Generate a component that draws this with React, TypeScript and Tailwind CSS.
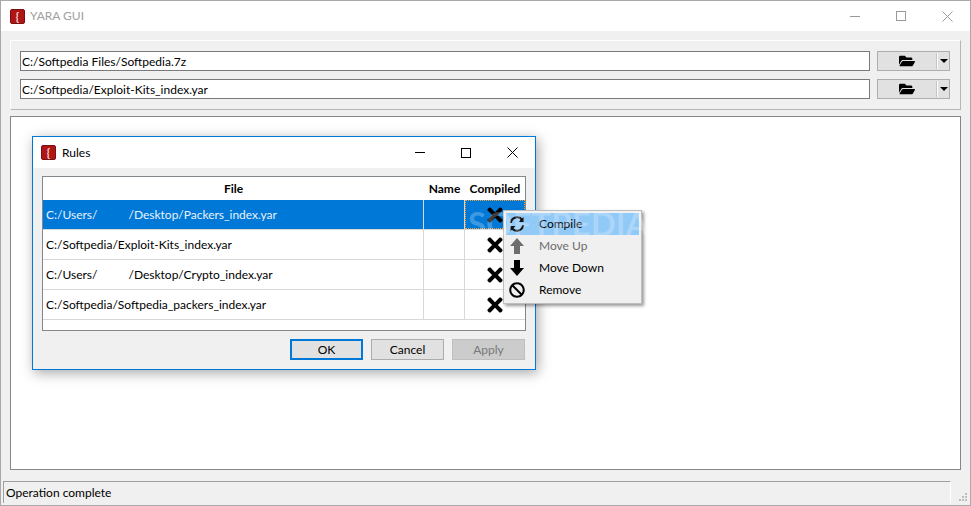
import { FaBan, FaFolderOpen, FaTimes } from 'react-icons/fa'

const ROWS = [
  { before: 'C:/Users/', after: '/Desktop/Packers_index.yar', selected: true },
  { before: 'C:/Softpedia/Exploit-Kits_index.yar', after: '' },
  { before: 'C:/Users/', after: '/Desktop/Crypto_index.yar' },
  { before: 'C:/Softpedia/Softpedia_packers_index.yar', after: '' },
]

function AppIcon() {
  return (
    <div className="w-[15px] h-[15px] rounded-[2px] bg-[#b01515] border border-[#7a1010] flex items-center justify-center text-[#f4d8d8] text-[11px] font-bold leading-none shrink-0">
      {'{'}
    </div>
  )
}

function PathRow({ value }: { value: string }) {
  return (
    <div className="flex items-center h-5">
      <div className="w-[850px] h-5 bg-white border border-[#7a7a7a] pl-[1px] text-[12px] leading-[19px] text-black">{value}</div>
      <div className="ml-[7px] w-[73px] h-5 bg-[#e1e1e1] border border-[#adadad] flex items-center">
        <div className="flex-1 flex justify-center">
          <FaFolderOpen className="text-black text-[16px]" />
        </div>
        <div className="w-[2px] h-[16px] bg-white border-l border-[#c4c4c4]" />
        <div className="w-[11px] flex justify-center">
          <div className="w-0 h-0 border-x-[4px] border-x-transparent border-t-[4px] border-t-black" />
        </div>
      </div>
    </div>
  )
}

function MenuItem({ icon, label, active, disabled }: { icon: React.ReactNode; label: string; active?: boolean; disabled?: boolean }) {
  return (
    <div className={`h-[22px] flex items-center ${active ? 'bg-[#91c9f7]' : ''}`}>
      <div className="w-[22px] flex justify-center">{icon}</div>
      <span className={`ml-[11px] text-[12px] ${disabled ? 'text-[#6d6d6d]' : 'text-black'}`}>{label}</span>
    </div>
  )
}

function Arrow({ up, color }: { up?: boolean; color: string }) {
  return (
    <svg width="16" height="18" viewBox="0 0 16 18" className={up ? '' : 'rotate-180'}>
      <path d="M8 1 L15 9 H11 V17 H5 V9 H1 Z" fill={color} />
    </svg>
  )
}

function DialogButton({ label, kind }: { label: string; kind?: 'default' | 'disabled' }) {
  const cls =
    kind === 'default'
      ? 'border-2 border-[#0078d7] bg-[#e1e1e1] text-black'
      : kind === 'disabled'
        ? 'border border-[#bfbfbf] bg-[#cccccc] text-[#787878]'
        : 'border border-[#adadad] bg-[#e1e1e1] text-black'
  return <div className={`w-[73px] h-[21px] flex items-center justify-center text-[12px] ${cls}`}>{label}</div>
}

export default function App() {
  return (
    <div className="relative w-[971px] h-[506px] overflow-hidden bg-[#f0f0f0] border border-[#a9a9a9] font-['Lato','Noto_Sans',sans-serif] flex flex-col">
      {/* title bar */}
      <div className="h-[30px] bg-white flex items-center pl-[9px] shrink-0">
        <AppIcon />
        <span className="ml-[5px] text-[12px] text-[#a0a0a0]">YARA GUI</span>
        <div className="ml-auto flex items-center">
          <div className="w-[46px] flex justify-center"><div className="w-[10px] h-px bg-[#9a9a9a]" /></div>
          <div className="w-[46px] flex justify-center"><div className="w-[10px] h-[10px] border border-[#9a9a9a]" /></div>
          <div className="w-[46px] flex justify-center">
            <svg width="11" height="11" viewBox="0 0 11 11"><path d="M0.5 0.5 L10.5 10.5 M10.5 0.5 L0.5 10.5" stroke="#9a9a9a" fill="none" /></svg>
          </div>
        </div>
      </div>

      <div className="flex-1 flex flex-col px-[9px] pt-[9px]">
        {/* file pickers */}
        <div className="h-[70px] border border-[#b5b5b5] border-t-white border-l-white flex flex-col gap-2 pl-[9px] pt-[10px] shrink-0">
          <PathRow value="C:/Softpedia Files/Softpedia.7z" />
          <PathRow value="C:/Softpedia/Exploit-Kits_index.yar" />
        </div>

        {/* main area */}
        <div className="mt-[6px] h-[354px] bg-white border border-[#82878c] shrink-0" />

        {/* status bar */}
        <div className="mt-[11px] ml-[-7px] flex items-stretch">
          <div className="w-[948px] h-[22px] border-t border-t-[#a0a0a0] border-l border-l-[#a0a0a0] border-r border-r-white pl-[2px] text-[12px] leading-[21px] text-black">
            Operation complete
          </div>
        </div>
      </div>

      {/* size grip */}
      <svg width="9" height="9" viewBox="0 0 9 9" className="absolute right-[2px] bottom-[3px]">
        <path d="M6 0h2v2h-2z M3 3h2v2h-2z M6 3h2v2h-2z M0 6h2v2h-2z M3 6h2v2h-2z M6 6h2v2h-2z" fill="#bdbdbd" />
      </svg>

      {/* Rules dialog */}
      <div className="absolute left-[31px] top-[135px] w-[504px] h-[234px] bg-[#f0f0f0] border border-[#0078d7] shadow-[2px_3px_12px_rgba(0,0,0,0.35)] flex flex-col">
        <div className="h-[31px] bg-white flex items-center pl-[8px] shrink-0">
          <AppIcon />
          <span className="ml-[6px] text-[12px] text-black">Rules</span>
          <div className="ml-auto flex items-center">
            <div className="w-[46px] flex justify-center"><div className="w-[10px] h-px bg-black" /></div>
            <div className="w-[46px] flex justify-center"><div className="w-[10px] h-[10px] border border-black" /></div>
            <div className="w-[46px] flex justify-center">
              <svg width="11" height="11" viewBox="0 0 11 11"><path d="M0.5 0.5 L10.5 10.5 M10.5 0.5 L0.5 10.5" stroke="#000" fill="none" /></svg>
            </div>
          </div>
        </div>

        <div className="mx-[9px] mt-[8px] w-[484px] h-[155px] bg-white border border-[#82878c] shrink-0">
          <div className="flex h-[23px] text-[12px] font-bold text-black leading-[23px] text-center">
            <div className="w-[381px]">File</div>
            <div className="w-[41px]">Name</div>
            <div className="w-[60px]">Compiled</div>
          </div>
          {ROWS.map((row, i) => (
            <div key={i} className={`flex h-[30px] border-b text-[12px] leading-[29px] border-[#d8d8d8] ${row.selected ? 'bg-[#0078d7] text-[#e8f2fb]' : 'text-black'}`}>
              <div className="w-[381px] pl-[3px] border-r border-[#d8d8d8]">
                <span>{row.before}</span>
                {row.after && <span className="ml-[31px]">{row.after}</span>}
              </div>
              <div className="w-[41px] border-r border-[#d8d8d8]" />
              <div className={`w-[60px] flex items-center justify-center ${row.selected ? 'border border-dotted border-[#f0a040]' : ''}`}>
                <FaTimes className="text-black text-[22px]" />
              </div>
            </div>
          ))}
        </div>

        <div className="flex justify-end gap-2 pr-[10px] mt-[8px]">
          <DialogButton label="OK" kind="default" />
          <DialogButton label="Cancel" />
          <DialogButton label="Apply" kind="disabled" />
        </div>
      </div>

      {/* context menu */}
      <div className="absolute left-[502px] top-[209px] w-[139px] h-[94px] bg-[#f0f0f0] border border-[#bdbdbd] shadow-[2px_2px_3px_rgba(0,0,0,0.4)] pt-[2px] px-[2px]">
        <MenuItem
          active
          label="Compile"
          icon={
            <svg width="16" height="16" viewBox="0 0 16 16" fill="none">
              <path d="M2 7 A6 6 0 0 1 13 4 M14 9 A6 6 0 0 1 3 12" stroke="#111" strokeWidth="2" />
              <path d="M14.5 1 V6 H9.5 Z M1.5 15 V10 H6.5 Z" fill="#111" />
            </svg>
          }
        />
        <MenuItem disabled label="Move Up" icon={<Arrow up color="#6d6d6d" />} />
        <MenuItem label="Move Down" icon={<Arrow color="#000" />} />
        <MenuItem label="Remove" icon={<FaBan className="text-black text-[16px]" />} />
      </div>

      {/* watermark */}
      <div className="absolute left-[467px] top-[204px] text-[33px] font-bold text-white/25 pointer-events-none leading-[36px]">
        SOFTPEDIA
      </div>
    </div>
  )
}
